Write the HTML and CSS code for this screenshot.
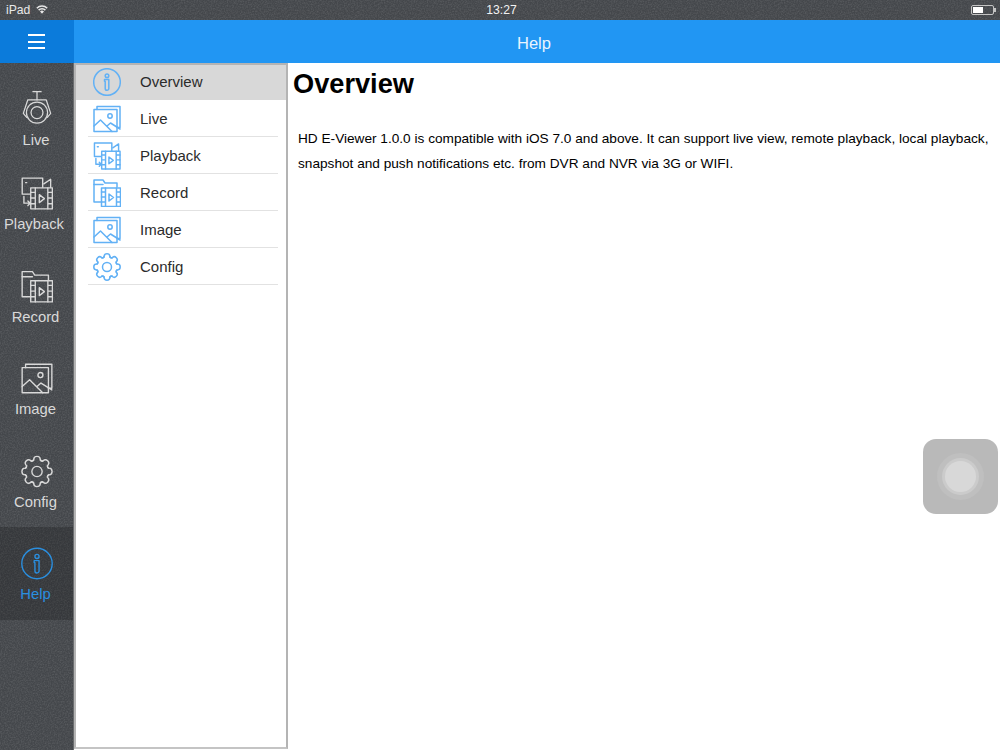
FILE: index.html
```html
<!DOCTYPE html>
<html lang="en">
<head>
<meta charset="utf-8">
<title>Help</title>
<link rel="stylesheet" href="styles.css">
</head>
<body>
<svg class="defs" width="0" height="0" aria-hidden="true">
  <symbol id="i-info" viewBox="0 0 28 28">
    <circle cx="14" cy="14" r="13.300"/>
    <circle cx="14" cy="7.800" r="1.800"/>
    <path d="M11.500 11.500h4.300v9a1.800 1.800 0 0 1-3.600 0v-7.300h-.700z"/>
  </symbol>
  <symbol id="i-image" viewBox="0 0 28 27">
    <path d="M4 4V1h23v21h-3"/>
    <rect x="1" y="4" width="23" height="22"/>
    <circle cx="17" cy="10.500" r="2.200"/>
    <path d="M1 20.500l6.500-6L19 26M14 20.500l3.500-3 9.500 6"/>
  </symbol>
  <symbol id="i-playback" viewBox="0 0 28 29">
    <path d="M8 15H1V1h18v8"/>
    <path d="M20 6l6-4v7M4 5h1"/>
    <path d="M2.500 17v6h5M6 21l2 2-2 2"/>
    <rect x="8.500" y="9.500" width="19" height="18.500"/>
    <path d="M12.500 9.500V28M23.500 9.500V28M8.500 13.500h4M8.500 18.500h4M8.500 23.500h4M23.500 13.500h4M23.500 18.500h4M23.500 23.500h4"/>
    <path d="M16 15.500l4.500 3.500-4.500 3.500z"/>
  </symbol>
  <symbol id="i-record" viewBox="0 0 28 28">
    <path d="M8 23H1V1h9l2 3h12v4"/>
    <path d="M1 5.500h9"/>
    <rect x="8.500" y="9" width="19" height="18.500"/>
    <path d="M12.500 9v18.500M23.500 9v18.500M8.500 13h4M8.500 18h4M8.500 23h4M23.500 13h4M23.500 18h4M23.500 23h4"/>
    <path d="M16 15l4.500 3.500-4.500 3.500z"/>
  </symbol>
  <symbol id="i-gear" viewBox="0 0 28 28">
    <path id="tooth" d="M8.900 5Q10.800 5 11.100 3.500Q11.200 .800 14 .800Q16.800 .800 16.900 3.500Q17.200 5 19.100 5"/>
    <use href="#tooth" transform="rotate(45 14 14)"/>
    <use href="#tooth" transform="rotate(90 14 14)"/>
    <use href="#tooth" transform="rotate(135 14 14)"/>
    <use href="#tooth" transform="rotate(180 14 14)"/>
    <use href="#tooth" transform="rotate(225 14 14)"/>
    <use href="#tooth" transform="rotate(270 14 14)"/>
    <use href="#tooth" transform="rotate(315 14 14)"/>
    <circle cx="14" cy="14" r="4.500"/>
  </symbol>
  <symbol id="i-camera" viewBox="0 0 28 34">
    <path d="M10 .700h8M14 .700v8"/>
    <path d="M5 8.700h18l4.300 13-3.300 4M5 8.700L.700 21.700l3.300 4"/>
    <circle cx="14" cy="21" r="10.300"/>
    <circle cx="14" cy="21" r="5.800"/>
  </symbol>
</svg>

<div class="statusbar">
  <div class="status-left">
    <span>iPad</span>
    <svg class="wifi" viewBox="0 0 12 9"><path d="M.8 3.200a7.400 7.400 0 0 1 10.400 0M2.600 5.100a4.800 4.800 0 0 1 6.800 0"/><path class="wifi-dot" d="M4 6.500a2.900 2.900 0 0 1 4 0L6 8.800z"/></svg>
  </div>
  <div class="status-time">13:27</div>
  <div class="status-right">
    <div class="battery"><div class="battery-level"></div></div>
    <div class="battery-tip"></div>
  </div>
</div>

<header class="topbar">
  <div class="menu-btn"><span></span><span></span><span></span></div>
  <div class="title">Help</div>
</header>

<div class="main">
  <nav class="sidebar">
    <a class="side-item side-live">
      <svg class="side-icon icon-camera"><use href="#i-camera"/></svg>
      <span class="side-label label-live">Live</span>
    </a>
    <a class="side-item">
      <svg class="side-icon"><use href="#i-playback"/></svg>
      <span class="side-label label-playback">Playback</span>
    </a>
    <a class="side-item">
      <svg class="side-icon"><use href="#i-record"/></svg>
      <span class="side-label">Record</span>
    </a>
    <a class="side-item">
      <svg class="side-icon"><use href="#i-image"/></svg>
      <span class="side-label">Image</span>
    </a>
    <a class="side-item">
      <svg class="side-icon"><use href="#i-gear"/></svg>
      <span class="side-label">Config</span>
    </a>
    <a class="side-item side-active">
      <svg class="side-icon"><use href="#i-info"/></svg>
      <span class="side-label">Help</span>
    </a>
  </nav>

  <aside class="panel">
    <div class="row row-active">
      <svg class="row-icon"><use href="#i-info"/></svg><span>Overview</span>
    </div>
    <div class="row"><svg class="row-icon"><use href="#i-image"/></svg><span>Live</span></div>
    <div class="row"><svg class="row-icon"><use href="#i-playback"/></svg><span>Playback</span></div>
    <div class="row"><svg class="row-icon"><use href="#i-record"/></svg><span>Record</span></div>
    <div class="row"><svg class="row-icon"><use href="#i-image"/></svg><span>Image</span></div>
    <div class="row"><svg class="row-icon"><use href="#i-gear"/></svg><span>Config</span></div>
  </aside>

  <article class="content">
    <h1>Overview</h1>
    <p>HD E-Viewer 1.0.0 is compatible with iOS 7.0 and above. It can support live view, remote playback, local playback, snapshot and push notifications etc. from DVR and NVR via 3G or WIFI.</p>
  </article>
</div>

<div class="assistive"><div class="assistive-ring"><div class="assistive-dot"></div></div></div>
</body>
</html>
```

FILE: styles.css
```css
* { box-sizing: border-box; }
html, body { margin: 0; padding: 0; }
body {
  width: 1000px;
  height: 750px;
  overflow: hidden;
  position: relative;
  display: flex;
  flex-direction: column;
  font-family: "Liberation Sans", Arial, sans-serif;
  background: #fff;
}
.defs { position: absolute; }
svg {
  fill: none;
  stroke: currentColor;
  stroke-width: 1.200;
  stroke-linejoin: round;
  stroke-linecap: round;
  display: block;
}

.statusbar, .sidebar {
  background-color: #44474b;
  background-image: url("data:image/svg+xml,%3Csvg xmlns='http://www.w3.org/2000/svg' width='200' height='200'%3E%3Cfilter id='n'%3E%3CfeTurbulence type='fractalNoise' baseFrequency='.7' numOctaves='2'/%3E%3CfeColorMatrix values='0 0 0 0 1 0 0 0 0 1 0 0 0 0 1 .22 0 0 0 -.08'/%3E%3C/filter%3E%3Crect width='200' height='200' filter='url(%23n)'/%3E%3C/svg%3E");
}
.statusbar {
  height: 20px;
  flex: none;
  color: #e8e8e8;
  display: grid;
  grid-template-columns: 1fr auto 1fr;
  align-items: center;
  font-size: 12.200px;
  padding: 0 4px 0 6px;
}
.status-left { display: flex; align-items: center; gap: 6px; }
.wifi { width: 12px; height: 9px; stroke-width: 1.500; stroke-linecap: butt; margin-top: -1px; }
.wifi-dot { fill: currentColor; stroke: none; }
.status-time { color: #f2f2f2; padding-left: 1px; }
.status-right { display: flex; align-items: center; justify-content: flex-end; }
.battery {
  width: 23px;
  height: 10px;
  border: 1px solid #c4c4c4;
  border-radius: 2px;
  padding: 1px;
}
.battery-level { width: 10px; height: 6px; background: #fff; }
.battery-tip { width: 2px; height: 4px; background: #c4c4c4; }

.topbar {
  height: 43px;
  flex: none;
  display: flex;
  background: #2196f3;
  color: #e9f4fe;
}
.menu-btn {
  width: 74px;
  background: #0b7bdb;
  display: flex;
  flex-direction: column;
  align-items: center;
  justify-content: center;
  gap: 4.500px;
  padding-right: 2px;
}
.menu-btn span { width: 17px; height: 2px; background: #fff; }
.title {
  flex: 1;
  text-align: center;
  font-size: 16.500px;
  line-height: 47px;
  padding-right: 6px;
}

.main { flex: 1; display: flex; min-height: 0; }

.sidebar {
  width: 74px;
  flex: none;
  border-right: 1px solid #6a6c6e;
  padding-top: 1px;
  color: #d9d9d9;
  display: flex;
  flex-direction: column;
  font-size: 14.800px;
}
.side-item {
  height: 92.500px;
  flex: none;
  display: flex;
  flex-direction: column;
  align-items: center;
  padding-top: 20px;
  padding-left: 1px;
}
.side-live { height: 93px; padding-top: 27px; }
.side-active { background: rgba(0, 0, 0, .2); color: #2a8fe0; }
.side-icon { width: 32px; height: 33px; }
.icon-camera { height: 35px; }
.side-label { line-height: 18px; margin: 5.300px 3px 0 0; }
.label-live { margin: 5px 2px 0 0; }
.label-playback { margin-right: 6px; }

.panel {
  width: 214px;
  flex: none;
  height: 686px;
  border: 2px solid #b4b4b4;
  border-bottom-color: #c4c4c4;
  background: #fff;
  font-size: 15px;
}
.row {
  height: 37px;
  margin: 0 8px 0 12px;
  padding-left: 5px;
  display: flex;
  align-items: center;
  gap: 19px;
  border-bottom: 1px solid #e2e2e2;
  color: #2b2b2b;
}
.row-active {
  height: 35px;
  margin: 0;
  padding: 0 0 2px 17px;
  background: #d8d8d8;
  border-bottom: 0;
}
.row-icon { width: 28px; height: 28px; color: #62b1f5; flex: none; stroke-width: 1.500; margin-top: 1px; }
.row-active .row-icon { margin-top: 0; }

.content { flex: 1; padding: 0 5px; color: #000; min-width: 0; }
.content h1 {
  margin: 5px 0 0;
  font-size: 27.200px;
  line-height: 31px;
  font-weight: 700;
}
.content p {
  margin: 27px 0 0 5px;
  font-size: 13.650px;
  line-height: 25px;
}

.assistive {
  position: absolute;
  left: 923px;
  top: 439px;
  width: 75px;
  height: 75px;
  border-radius: 13px;
  background: #b9b9b9;
  display: flex;
  align-items: center;
  justify-content: center;
}
.assistive-ring {
  width: 47px;
  height: 47px;
  border-radius: 50%;
  background: #bfbfbf;
  display: flex;
  align-items: center;
  justify-content: center;
}
.assistive-dot {
  width: 31px;
  height: 31px;
  border-radius: 50%;
  background: #d8d8d8;
  box-shadow: 0 0 0 3px #cbcbcb;
}
```
